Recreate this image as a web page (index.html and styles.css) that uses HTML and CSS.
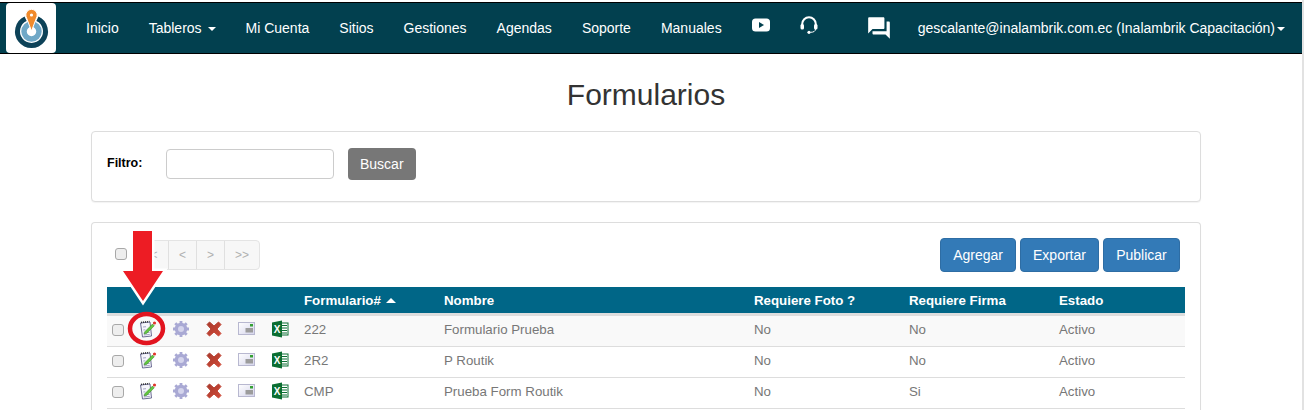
FILE: index.html
```html
<!DOCTYPE html>
<html lang="es">
<head>
    <meta charset="UTF-8">
    <title>Formularios</title>
    <link rel="stylesheet" href="styles.css">
</head>
<body>
    <svg class="icon-defs" width="0" height="0">
        <defs>
            <linearGradient id="del-fill" x1="0" y1="0" x2="1" y2="1">
                <stop offset="0" stop-color="#a8392c"/>
                <stop offset="1" stop-color="#d04a38"/>
            </linearGradient>
            <linearGradient id="card-fill" x1="0" y1="0" x2="1" y2="1">
                <stop offset="0" stop-color="#ffffff"/>
                <stop offset="1" stop-color="#d5d5ec"/>
            </linearGradient>
            <symbol id="ico-edit" viewBox="0 0 18 18">
                <path d="M1.500 3l9.500-1 1.500 14-9 1z" fill="#f6f6fc" stroke="#5c5c88" stroke-width=".9"/>
                <path d="M2 2.500l8.500-1" stroke="#333333" stroke-width="1.600" stroke-dasharray="1 1"/>
                <path d="M4 7l3-.3M4.300 10l2-.2M4.600 13l6-.6M4.800 15l6-.6" stroke="#9090b8" stroke-width=".8"/>
                <path d="M6 11.500L13.500 4l1.800 1.800-7.500 7.500-2.700.8z" fill="#62c63e" stroke="#2f7d20" stroke-width=".5"/>
                <circle cx="15.500" cy="3" r="1.600" fill="#e0352b"/>
            </symbol>
            <symbol id="ico-gear" viewBox="0 0 18 18">
                <circle cx="9" cy="9" r="6.300" fill="#a9a9d4"/>
                <path d="M9 1v16M1 9h16M3.300 3.300l11.400 11.400M14.700 3.300L3.300 14.700" stroke="#a9a9d4" stroke-width="2.800"/>
                <circle cx="9" cy="9" r="3" fill="#d4d4ec"/>
            </symbol>
            <symbol id="ico-del" viewBox="0 0 18 18">
                <path d="M4.500 2L9 6l4.500-4 2.500 2.500L12 9l4 4.500-2.500 2.500L9 12l-4.500 4L2 13.500 6 9 2 4.500z" fill="url(#del-fill)" stroke="url(#del-fill)" stroke-linejoin="round"/>
            </symbol>
            <symbol id="ico-card" viewBox="0 0 18 18">
                <rect x=".5" y="2.500" width="16" height="12" fill="url(#card-fill)" stroke="#b8b8d0"/>
                <rect x="7.500" y="8" width="7.500" height="4.500" fill="#9c9c9c"/>
                <rect x="12" y="4" width="3" height="2.500" fill="#35a035"/>
            </symbol>
            <symbol id="ico-excel" viewBox="0 0 18 18">
                <rect x="9" y="3" width="8" height="12" fill="#ffffff" stroke="#0b6e32"/>
                <path d="M11 5.500h5M11 8h5M11 10.500h5M11 13h5" stroke="#0b6e32"/>
                <path d="M1 2.500L11 .5v17L1 15.500z" fill="#0b6e32"/>
                <text class="excel-x" x="6" y="12.500">X</text>
            </symbol>
        </defs>
    </svg>

    <nav class="navbar">
        <a class="brand">
            <svg width="50" height="50" viewBox="0 0 50 50">
                <path d="M19.600 15.800A14 14 0 1 0 31.400 15.800" fill="none" stroke="#0d4258" stroke-width="5"/>
                <circle cx="25.500" cy="28.500" r="7.500" fill="none" stroke="#6fa8c7" stroke-width="5.500"/>
                <path d="M25.500 28L20 13.500a5.700 5.700 0 1 1 11 0z" fill="#f08a2c" stroke="#ffffff" stroke-width="1"/>
                <circle cx="25.500" cy="12" r="1.600" fill="#ffffff"/>
            </svg>
        </a>
        <ul class="nav-links">
            <li>Inicio</li>
            <li>Tableros <span class="caret"></span></li>
            <li>Mi Cuenta</li>
            <li>Sitios</li>
            <li>Gestiones</li>
            <li>Agendas</li>
            <li>Soporte</li>
            <li>Manuales</li>
            <li class="nav-icon">
                <svg width="18" height="14" viewBox="0 0 18 14"><rect width="18" height="13" y=".5" rx="3.500" fill="#fff"/><path d="M7 4l5 3-5 3z" fill="#02404f"/></svg>
            </li>
            <li class="nav-icon">
                <svg width="18" height="18" viewBox="0 0 18 18" fill="none"><path d="M2.200 10V8a6.800 6.800 0 0 1 13.600 0v2" stroke="#fff" stroke-width="2"/><rect x=".5" y="8" width="3.500" height="5.500" rx="1.500" fill="#fff"/><rect x="14" y="8" width="3.500" height="5.500" rx="1.500" fill="#fff"/><circle cx="9" cy="16.300" r="1.600" fill="#fff"/><path d="M15.500 13c0 2.300-2 3.300-5 3.300" stroke="#fff"/></svg>
            </li>
        </ul>
        <div class="nav-right">
            <svg class="chat-icon" width="26" height="26" viewBox="0 0 24 24"><path fill="#fff" d="M21 6h-2v9H6v2c0 .55.45 1 1 1h11l4 4V7c0-.55-.45-1-1-1zm-4 6V3c0-.55-.45-1-1-1H3c-.55 0-1 .45-1 1v14l4-4h10c.55 0 1-.45 1-1z"/></svg>
            <span class="user">gescalante@inalambrik.com.ec (Inalambrik Capacitación)<span class="caret"></span></span>
        </div>
    </nav>

    <main class="container">
        <h2 class="page-title">Formularios</h2>

        <section class="panel filter-panel">
            <label class="filter-label" for="filtro">Filtro:</label>
            <input class="filter-input" id="filtro" type="text">
            <button class="btn btn-grey">Buscar</button>
        </section>

        <section class="panel list-panel">
            <div class="toolbar">
                <div class="toolbar-left">
                    <input class="check" type="checkbox">
                    <div class="pager">
                        <span>&lt;&lt;</span>
                        <span>&lt;</span>
                        <span>&gt;</span>
                        <span>&gt;&gt;</span>
                    </div>
                </div>
                <div class="toolbar-right">
                    <button class="btn btn-blue">Agregar</button>
                    <button class="btn btn-blue btn-export">Exportar</button>
                    <button class="btn btn-blue btn-publish">Publicar</button>
                </div>
            </div>

            <table class="grid">
                <thead>
                    <tr>
                        <th class="col-check"></th>
                        <th class="col-ico"></th>
                        <th class="col-ico"></th>
                        <th class="col-ico"></th>
                        <th class="col-ico"></th>
                        <th class="col-ico"></th>
                        <th class="col-code">Formulario# <span class="sort-up"></span></th>
                        <th class="col-name">Nombre</th>
                        <th class="col-photo">Requiere Foto ?</th>
                        <th class="col-sign">Requiere Firma</th>
                        <th>Estado</th>
                    </tr>
                </thead>
                <tbody>
                    <tr>
                        <td><input class="check" type="checkbox"></td>
                        <td><svg class="ico"><use href="#ico-edit"/></svg></td>
                        <td><svg class="ico"><use href="#ico-gear"/></svg></td>
                        <td><svg class="ico"><use href="#ico-del"/></svg></td>
                        <td><svg class="ico"><use href="#ico-card"/></svg></td>
                        <td><svg class="ico"><use href="#ico-excel"/></svg></td>
                        <td>222</td>
                        <td>Formulario Prueba</td>
                        <td>No</td>
                        <td>No</td>
                        <td>Activo</td>
                    </tr>
                    <tr>
                        <td><input class="check" type="checkbox"></td>
                        <td><svg class="ico"><use href="#ico-edit"/></svg></td>
                        <td><svg class="ico"><use href="#ico-gear"/></svg></td>
                        <td><svg class="ico"><use href="#ico-del"/></svg></td>
                        <td><svg class="ico"><use href="#ico-card"/></svg></td>
                        <td><svg class="ico"><use href="#ico-excel"/></svg></td>
                        <td>2R2</td>
                        <td>P Routik</td>
                        <td>No</td>
                        <td>No</td>
                        <td>Activo</td>
                    </tr>
                    <tr>
                        <td><input class="check" type="checkbox"></td>
                        <td><svg class="ico"><use href="#ico-edit"/></svg></td>
                        <td><svg class="ico"><use href="#ico-gear"/></svg></td>
                        <td><svg class="ico"><use href="#ico-del"/></svg></td>
                        <td><svg class="ico"><use href="#ico-card"/></svg></td>
                        <td><svg class="ico"><use href="#ico-excel"/></svg></td>
                        <td>CMP</td>
                        <td>Prueba Form Routik</td>
                        <td>No</td>
                        <td>Si</td>
                        <td>Activo</td>
                    </tr>
                </tbody>
            </table>
        </section>
    </main>

    <!-- annotation drawn over the screenshot -->
    <svg class="callout" width="60" height="120" viewBox="0 0 60 120">
        <path d="M12 0h19v40h11L22 70 2 40h10z" fill="#ffffff" stroke="#ffffff" stroke-width="5"/>
        <path d="M12 0h19v40h11L22 70 2 40h10z" fill="#ed1c24"/>
        <ellipse cx="25.500" cy="97.500" rx="16.500" ry="14.500" fill="none" stroke="#e2141f" stroke-width="4.500"/>
    </svg>
</body>
</html>
```

FILE: styles.css
```css
:root {
    --nav-color: #02404f;
    --head-color: #006687;
    --blue-color: #337ab7;
    --line-color: #dddddd;
    --text-color: #777777;
}

html, body {
    height: 100%;
    overflow: hidden;
}

body {
    margin: 0;
    padding-top: 2px;
    box-sizing: border-box;
    background: #ffffff;
    border-right: 2px solid #e2e2e2;
    font-family: "Liberation Sans", Arial, sans-serif;
    font-size: 14px;
    color: #333333;
}

.icon-defs {
    position: absolute;
}

.excel-x {
    font-family: "Liberation Sans", Arial, sans-serif;
    font-size: 10px;
    font-weight: bold;
    fill: #ffffff;
    text-anchor: middle;
}

/* navbar */
.navbar {
    display: flex;
    align-items: center;
    height: 50px;
    padding-left: 6px;
    background: var(--nav-color);
    border-top: 1px solid #000000;
    border-bottom: 1px solid #000000;
    color: #ffffff;
}

.brand {
    display: flex;
    width: 50px;
    height: 50px;
    border-radius: 4px;
    background: #ffffff;
}

.nav-links {
    display: flex;
    align-items: center;
    margin: 0 0 0 15px;
    padding: 0;
    list-style: none;
}

.nav-links li {
    padding: 0 15px;
    white-space: nowrap;
}

.nav-links .nav-icon {
    display: flex;
    padding: 0 15px;
    margin-top: -6px;
}

.caret {
    display: inline-block;
    margin-left: 2px;
    vertical-align: middle;
    border-top: 4px solid #ffffff;
    border-left: 4px solid transparent;
    border-right: 4px solid transparent;
}

.nav-right {
    display: flex;
    align-items: center;
    margin-left: 33px;
    white-space: nowrap;
}

.chat-icon {
    margin-right: 26px;
}

/* page */
.container {
    width: 1110px;
    margin-left: 91px;
}

.page-title {
    margin: 24px 0 20px;
    font-size: 30px;
    font-weight: 500;
    line-height: 33px;
    text-align: center;
}

.panel {
    box-sizing: border-box;
    background: #ffffff;
    border: 1px solid var(--line-color);
    border-radius: 4px;
    box-shadow: 0 1px 1px rgba(0, 0, 0, 0.05);
}

.filter-panel {
    display: flex;
    align-items: flex-start;
    height: 71px;
    margin-bottom: 20px;
    padding: 16px 15px;
}

.filter-label {
    width: 59px;
    margin-top: 8px;
    font-size: 12.5px;
    font-weight: bold;
    color: #000000;
}

.filter-input {
    box-sizing: border-box;
    width: 168px;
    height: 30px;
    margin: 1px 14px 0 0;
    border: 1px solid #cccccc;
    border-radius: 4px;
}

.btn {
    box-sizing: border-box;
    height: 32px;
    padding: 0 11px;
    border: 1px solid transparent;
    border-radius: 4px;
    color: #ffffff;
    font-family: inherit;
    font-size: 14px;
}

.btn-grey {
    background: #777777;
}

.btn-blue {
    height: 34px;
    padding: 0 12px;
    background: var(--blue-color);
    border-color: #2e6da4;
}

.btn-export {
    width: 79px;
    padding: 0;
}

.btn-publish {
    width: 77px;
    padding: 0;
}

.list-panel {
    height: 188px;
    padding: 15px 15px 0;
    border-bottom: 0;
    border-radius: 4px 4px 0 0;
}

.toolbar {
    display: flex;
    justify-content: space-between;
    align-items: center;
    height: 34px;
    margin-bottom: 15px;
    padding-right: 5px;
}

.toolbar-left {
    display: flex;
    align-items: center;
}

.toolbar-right {
    display: flex;
    gap: 4px;
}

.check {
    appearance: none;
    box-sizing: border-box;
    display: block;
    width: 12px;
    height: 12px;
    margin: 2px 0 0 0;
    background: #eeeeee;
    border: 1px solid #a8a8a8;
    border-radius: 3px;
}

.toolbar-left .check {
    margin: -2px 5px 0 8px;
}

.pager {
    display: flex;
    box-sizing: border-box;
    height: 30px;
    border: 1px solid #e4e4e4;
    border-radius: 4px;
    color: #b0b0b0;
    font-size: 12px;
    background: #f7f7f7;
}

.pager span {
    display: flex;
    box-sizing: border-box;
    align-items: center;
    justify-content: center;
    width: 28px;
    border-left: 1px solid #e0e0e0;
}

.pager span:first-child {
    width: 35px;
    border-left: 0;
}

.pager span:last-child {
    width: 35px;
}

/* table */
.grid {
    width: 1078px;
    border-collapse: collapse;
    table-layout: fixed;
    font-size: 13.3px;
    color: var(--text-color);
}

.grid th {
    height: 26px;
    padding: 0 0 0 5px;
    background: var(--head-color);
    border-bottom: 3px solid var(--line-color);
    color: #ffffff;
    text-align: left;
}

.grid td {
    height: 26px;
    padding: 0 0 4px 5px;
    border-bottom: 1px solid var(--line-color);
}

.grid tbody tr:first-child td {
    background: #f9f9f9;
}

.col-check { width: 22px; }
.col-ico { width: 28px; }
.col-code { width: 135px; }
.col-name { width: 305px; }
.col-photo { width: 150px; }
.col-sign { width: 145px; }

.sort-up {
    display: inline-block;
    margin-left: 1px;
    vertical-align: middle;
    border-bottom: 5px solid #ffffff;
    border-left: 5px solid transparent;
    border-right: 5px solid transparent;
}

.ico {
    display: block;
    width: 18px;
    height: 18px;
}

/* red annotation */
.callout {
    position: absolute;
    left: 121px;
    top: 231px;
}
```
